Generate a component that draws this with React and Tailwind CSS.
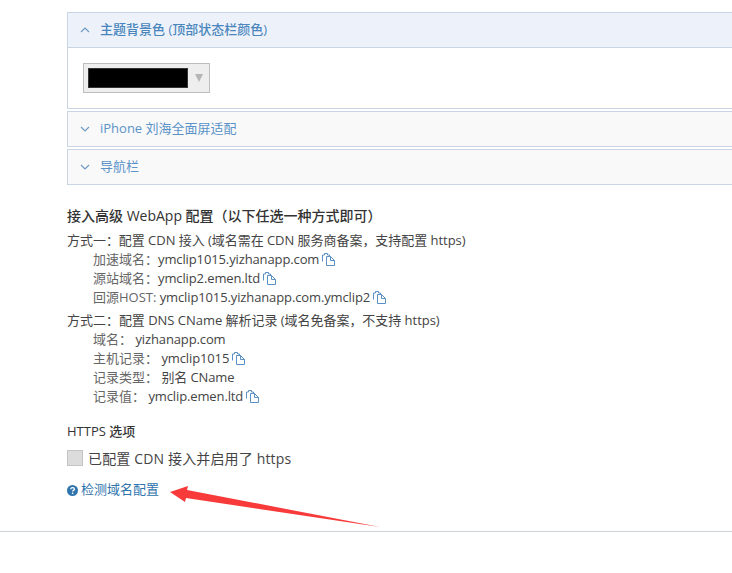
import React from "react";

function Chevron({ up }) {
  return (
    <svg width="10" height="6" viewBox="0 0 10 6" className="shrink-0 text-[#6f9ac4]" fill="none" stroke="currentColor" strokeWidth="1.2">
      {up ? <path d="M1 5 L5 1 L9 5" /> : <path d="M1 1 L5 5 L9 1" />}
    </svg>
  );
}

function CopyIcon() {
  return (
    <svg width="13" height="13" viewBox="0 0 13 13" className="inline-block ml-[3px] align-[-2px] text-[#5b90c6]" fill="none" stroke="currentColor" strokeWidth="1">
      <path d="M0.5 8.5 V2 H2.5 V0.5 H5.5 V2 H7.5 V3.5" />
      <path d="M4.5 3.5 H8.5 L12.5 7.5 V12.5 H4.5 Z" fill="#fff" />
      <path d="M8.5 3.5 V7.5 H12.5" />
    </svg>
  );
}

function PanelHead({ up, children, active }) {
  return (
    <div className={`h-[34px] flex items-center pl-[12px] gap-[10px] text-[13px] ${active ? "bg-[#edf2fa] text-[#4a86bd] font-medium" : "bg-[#f9f9f9] text-[#5b93c9]"}`}>
      <Chevron up={up} />
      <span>{children}</span>
    </div>
  );
}

function Line({ children }) {
  return <div className="h-[19px] leading-[19px] pl-[26px] text-[#666]">{children}</div>;
}

function Val({ children }) {
  return <span className="text-[#444] tracking-[-0.12px]">{children}</span>;
}

export default function App() {
  return (
    <div className="relative w-[732px] h-[573px] overflow-hidden bg-white font-['Open_Sans','Noto_Sans_CJK_SC',sans-serif] text-[13px] text-[#444]">
      <div className="pl-[67px] pt-[12px] w-[900px]">
        <div className="border border-[#c9d5e3]">
          <div className="border-b border-[#c9d5e3]"><PanelHead up active>主题背景色 (顶部状态栏颜色)</PanelHead></div>
          <div className="h-[60px] pl-[15px] pt-[15px]">
            <div className="w-[127px] h-[30px] bg-[#eeeeee] border border-[#bdbdbd] flex items-center pl-[4px]">
              <div className="w-[100px] h-[20px] bg-black border border-[#333]"></div>
              <svg width="8" height="8" viewBox="0 0 8 8" className="ml-[7px] text-[#b5b5b5]"><path d="M0 0 H8 L4 8 Z" fill="currentColor" /></svg>
            </div>
          </div>
        </div>
        <div className="mt-[2px] border border-[#c9d5e3]"><PanelHead>iPhone 刘海全面屏适配</PanelHead></div>
        <div className="mt-[2px] border border-[#c9d5e3]"><PanelHead>导航栏</PanelHead></div>

        <div className="mt-[21px] h-[20px] leading-[20px] text-[14px] font-medium text-[#333]">接入高级 WebApp 配置（以下任选一种方式即可）</div>
        <div className="mt-[5px] h-[19px] leading-[19px] tracking-[-0.04px]">方式一：配置 CDN 接入 (域名需在 CDN 服务商备案，支持配置 https)</div>
        <Line>加速域名：<Val>ymclip1015.yizhanapp.com</Val><CopyIcon /></Line>
        <Line>源站域名：<Val>ymclip2.emen.ltd</Val><CopyIcon /></Line>
        <Line>回源HOST:<Val> ymclip1015.yizhanapp.com.ymclip2</Val><CopyIcon /></Line>
        <div className="mt-[4px] h-[19px] leading-[19px] tracking-[-0.03px]">方式二：配置 DNS CName 解析记录 (域名免备案，不支持 https)</div>
        <Line>域名： <Val>yizhanapp.com</Val></Line>
        <Line>主机记录： <Val>ymclip1015</Val><CopyIcon /></Line>
        <Line>记录类型： <Val>别名 CName</Val></Line>
        <Line>记录值： <Val>ymclip.emen.ltd</Val><CopyIcon /></Line>

        <div className="mt-[15px] h-[20px] leading-[20px] font-medium text-[#333]">HTTPS 选项</div>
        <div className="mt-[7px] flex items-center h-[20px]">
          <div className="w-[16px] h-[16px] bg-[#dcdcdc] border border-[#c4c4c4]"></div>
          <span className="ml-[5px] text-[14px] text-[#444] tracking-[0.15px]">已配置 CDN 接入并启用了 https</span>
        </div>
        <div className="mt-[12px] flex items-center h-[20px] text-[#2f74ad]">
          <svg width="11" height="11" viewBox="0 0 11 11" className="mr-[3px]">
            <circle cx="5.5" cy="5.5" r="5.5" fill="#2f74ad" />
            <path d="M3.7 4.2 C3.8 2.2 7.4 2.2 7.4 4.2 C7.4 5.4 5.6 5.4 5.6 6.6" stroke="#fff" strokeWidth="1.3" fill="none" />
            <rect x="4.9" y="7.6" width="1.4" height="1.4" fill="#fff" />
          </svg>
          检测域名配置
        </div>
      </div>
      <div className="absolute left-0 top-[531px] w-full border-t border-[#cfd4d9]"></div>
      <svg className="absolute left-0 top-0" width="732" height="573" viewBox="0 0 732 573">
        <path d="M170 492 L188 486 L187 490 L380 527 L186 498 L185 502 Z" fill="#f83a3a" />
      </svg>
    </div>
  );
}
